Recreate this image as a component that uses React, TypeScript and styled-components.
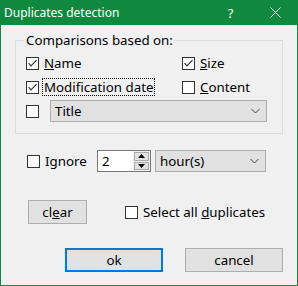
import React from 'react';
import styled, { createGlobalStyle } from 'styled-components';

const GlobalStyle = createGlobalStyle`
  html, body {
    margin: 0;
    padding: 0;
    background: #f0f0f0;
  }
  body {
    font-family: "Noto Sans", "Open Sans", sans-serif;
    color: #000;
  }
`;

function Check({ checked }: { checked?: boolean }) {
  return (
    <Box>
      {checked && (
        <svg width="11" height="11" viewBox="0 0 11 11">
          <path d="M1.5 5.2 L4 7.8 L9.5 2.2" fill="none" stroke="#333" strokeWidth="1.2" />
        </svg>
      )}
    </Box>
  );
}

function Chevron() {
  return (
    <svg width="9" height="6" viewBox="0 0 9 6">
      <path d="M0.5 1 L4.5 5 L8.5 1" fill="none" stroke="#444" strokeWidth="1" />
    </svg>
  );
}

function App() {
  return (
    <>
      <GlobalStyle />
      <Window>
        <TitleBar>
          <Title>Duplicates detection</Title>
          <TitleBtn>?</TitleBtn>
          <TitleBtn>
            <svg width="11" height="11" viewBox="0 0 11 11">
              <path d="M0.5 0.5 L10.5 10.5 M10.5 0.5 L0.5 10.5" stroke="#fff" strokeWidth="1" />
            </svg>
          </TitleBtn>
        </TitleBar>
        <Content>
          <Group>
            <Legend>Comparisons based on:</Legend>
            <Options>
              <Option>
                <Check checked />
                <Label><u>N</u>ame</Label>
              </Option>
              <Option>
                <Check checked />
                <Label><u>S</u>ize</Label>
              </Option>
              <Option>
                <Check checked />
                <Label $focused>Modification date</Label>
              </Option>
              <Option>
                <Check />
                <Label><u>C</u>ontent</Label>
              </Option>
            </Options>
            <FieldRow>
              <Check />
              <Select $grow>
                <span>Title</span>
                <Chevron />
              </Select>
            </FieldRow>
          </Group>

          <IgnoreRow>
            <Option>
              <Check />
              <Label>I<u>g</u>nore</Label>
            </Option>
            <Spin>
              <SpinInput>2</SpinInput>
              <SpinButtons>
                <SpinBtn>
                  <svg width="7" height="4" viewBox="0 0 7 4"><path d="M0 4 L3.5 0 L7 4 Z" fill="#000" /></svg>
                </SpinBtn>
                <SpinBtn>
                  <svg width="7" height="4" viewBox="0 0 7 4"><path d="M0 0 L3.5 4 L7 0 Z" fill="#000" /></svg>
                </SpinBtn>
              </SpinButtons>
            </Spin>
            <Select $width={111}>
              <span>hour(s)</span>
              <Chevron />
            </Select>
          </IgnoreRow>

          <ClearRow>
            <Button $width={59}>cl<u>e</u>ar</Button>
            <Option>
              <Check />
              <Label>Select all <u>d</u>uplicates</Label>
            </Option>
          </ClearRow>

          <ActionRow>
            <Button $width={98} $default>ok</Button>
            <Button $width={98}>cancel</Button>
          </ActionRow>
        </Content>
      </Window>
    </>
  );
}

export default App;

const Window = styled.div`
  width: 298px;
  height: 286px;
  box-sizing: border-box;
  border: 1px solid #10893e;
  border-top: none;
  display: flex;
  flex-direction: column;
  background: #f0f0f0;
`;

const TitleBar = styled.div`
  height: 25px;
  background: #10893e;
  display: flex;
  align-items: center;
  margin: 0 -1px;
  flex-shrink: 0;
`;

const Title = styled.div`
  flex: 1;
  padding-left: 4px;
  color: #fff;
  font-size: 12px;
  line-height: 25px;
`;

const TitleBtn = styled.div`
  width: 45px;
  height: 25px;
  display: flex;
  align-items: center;
  justify-content: center;
  color: #fff;
  font-size: 13px;
`;

const Content = styled.div`
  flex: 1;
  padding: 6px 14px 0;
  font-size: 13.3px;
`;

const Group = styled.fieldset`
  margin: 0;
  padding: 5px 15px 11px 10px;
  border: 1px solid #dcdcdc;
  min-width: 0;
`;

const Legend = styled.legend`
  padding: 0 2px;
  margin-left: -2px;
  line-height: 18px;
`;

const Options = styled.div`
  display: grid;
  grid-template-columns: 156px 1fr;
  row-gap: 6px;
`;

const Option = styled.div`
  display: flex;
  align-items: center;
  height: 18px;
  gap: 3px;
`;

const Box = styled.span`
  width: 13px;
  height: 13px;
  box-sizing: border-box;
  border: 1px solid #333;
  background: #fff;
  display: inline-flex;
  align-items: center;
  justify-content: center;
  flex-shrink: 0;
`;

const Label = styled.span<{ $focused?: boolean }>`
  white-space: nowrap;
  line-height: 16px;
  padding: 0 1px;
  border: 1px dotted ${(p) => (p.$focused ? '#000' : 'transparent')};
`;

const FieldRow = styled.div`
  display: flex;
  align-items: center;
  gap: 11px;
  margin-top: 4px;
`;

const Select = styled.div<{ $grow?: boolean; $width?: number }>`
  ${(p) => (p.$grow ? 'flex: 1;' : `width: ${p.$width}px;`)}
  height: 22px;
  box-sizing: border-box;
  background: #e1e1e1;
  border: 1px solid #adadad;
  display: flex;
  align-items: center;
  justify-content: space-between;
  padding: 0 6px 0 4px;
`;

const IgnoreRow = styled.div`
  display: flex;
  align-items: center;
  margin-top: 16px;
  padding-left: 12px;
  height: 22px;

  & > ${Option} {
    width: 70px;
  }
`;

const Spin = styled.div`
  display: flex;
  height: 22px;
  width: 54px;
  box-sizing: border-box;
  border: 1px solid #7a7a7a;
  background: #fff;
  margin-right: 4px;
`;

const SpinInput = styled.div`
  flex: 1;
  padding-left: 4px;
  line-height: 20px;
`;

const SpinButtons = styled.div`
  width: 17px;
  display: flex;
  flex-direction: column;
  gap: 1px;
  padding: 1px;
  box-sizing: border-box;
  background: #f0f0f0;
`;

const SpinBtn = styled.div`
  flex: 1;
  border: 1px solid #adadad;
  background: #e1e1e1;
  display: flex;
  align-items: center;
  justify-content: center;
`;

const ClearRow = styled.div`
  display: flex;
  align-items: center;
  gap: 38px;
  margin-top: 28px;
  padding-left: 13px;
`;

const Button = styled.div<{ $width: number; $default?: boolean }>`
  width: ${(p) => p.$width}px;
  height: 24px;
  box-sizing: border-box;
  background: #e1e1e1;
  border: ${(p) => (p.$default ? '2px solid #0078d7' : '1px solid #adadad')};
  display: flex;
  align-items: center;
  justify-content: center;
`;

const ActionRow = styled.div`
  display: flex;
  justify-content: flex-end;
  gap: 22px;
  margin-top: 24px;
  padding-right: 0;
`;
